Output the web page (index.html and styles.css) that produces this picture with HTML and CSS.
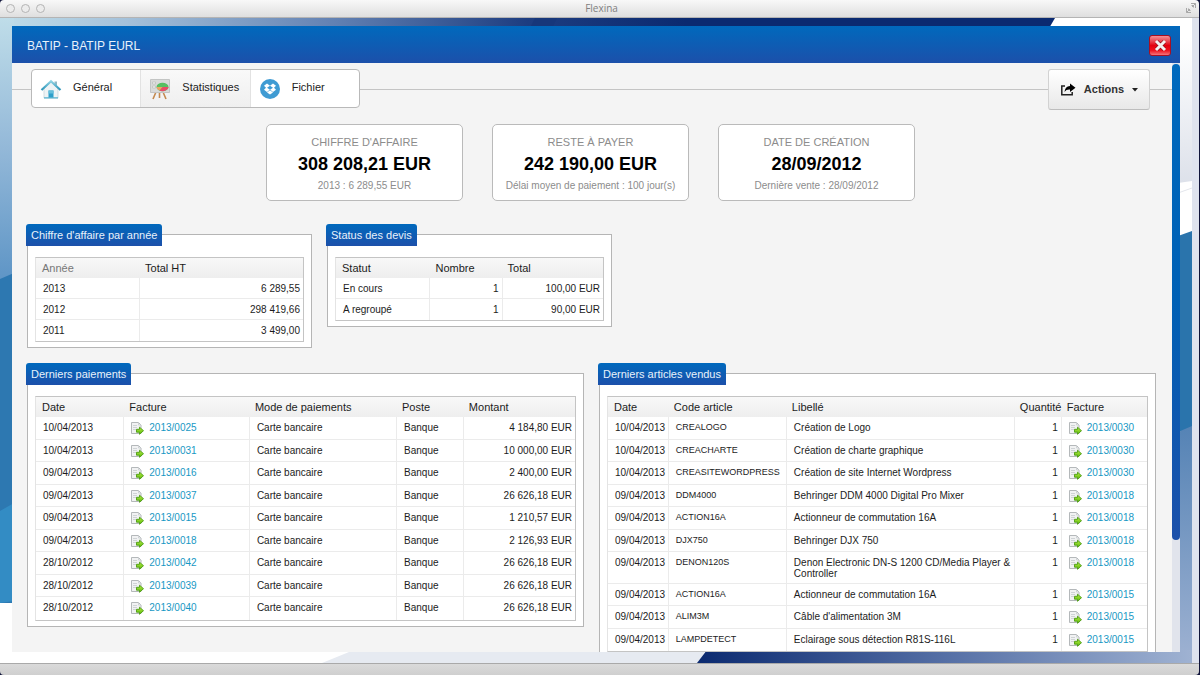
FILE: index.html
```html
<!DOCTYPE html>
<html lang="fr">
<head>
<meta charset="utf-8">
<title>Flexina</title>
<link rel="stylesheet" href="styles.css">
</head>
<body>
<svg class="defs" width="0" height="0" aria-hidden="true">
  <defs>
    <linearGradient id="g-arrow" x1="0" y1="0" x2="0" y2="1"><stop offset="0" stop-color="#b6ee3c"/><stop offset="1" stop-color="#5cb811"/></linearGradient>
    <symbol id="open-doc" viewBox="0 0 13 13">
      <path d="M.5 .5h7l2.500 2.500v8.500h-9.500z" fill="#f1f2f3" stroke="#b4b8ba"/>
      <path d="M7.500 .5v2.500h2.500M2 3.500h4M2 5.500h4M2 7.500h3" fill="none" stroke="#cfd3d5"/>
      <path d="M5.500 7.300h3V5.200l4 3.500-4 3.600v-2.100h-3z" fill="url(#g-arrow)" stroke="#4c9c12" stroke-width=".9" stroke-linejoin="round"/>
    </symbol>
  </defs>
</svg>
<div class="window">
  <header class="titlebar">
    <div class="lights">
      <button class="light" aria-label="Fermer la fenêtre"></button>
      <button class="light" aria-label="Réduire"></button>
      <button class="light" aria-label="Agrandir"></button>
    </div>
    <span class="window-title">Flexina</span>
    <button class="expand" aria-label="Plein écran">
      <svg width="12" height="12" viewBox="0 0 12 12" fill="none" stroke="#a8a8a8"><path d="M6 1.500h4.500V6M10.500 1.500L7 5M6.500 3.500h2v2M1.500 6v4.500H6M1.500 10.500L5 7M3.500 6.500v2h2"/></svg>
    </button>
  </header>

  <div class="desktop">
    <svg class="wallpaper" viewBox="0 0 1192 645" preserveAspectRatio="none" aria-hidden="true">
      <defs>
        <linearGradient id="w-top"><stop offset="0" stop-color="#bfdde9"/><stop offset=".12" stop-color="#a4c1da"/><stop offset=".32" stop-color="#6180b2"/><stop offset=".5" stop-color="#1d3d80"/><stop offset=".65" stop-color="#0b2a70"/><stop offset="1" stop-color="#0b2a70"/></linearGradient>
        <linearGradient id="w-left" x1="0" y1="0" x2="0" y2="1"><stop offset="0" stop-color="#bfdde9"/><stop offset=".5" stop-color="#93b8d8"/><stop offset="1" stop-color="#5e95c6"/></linearGradient>
        <linearGradient id="w-bottom"><stop offset="0" stop-color="#0b2a70"/><stop offset=".5" stop-color="#556fa5"/><stop offset="1" stop-color="#9fb2d2"/></linearGradient>
        <linearGradient id="w-right" x1="0" y1="0" x2="0" y2="1"><stop offset="0" stop-color="#5583b5"/><stop offset="1" stop-color="#9fb2d2"/></linearGradient>
        <linearGradient id="w-haze" x1="0" y1="0" x2="0" y2="1"><stop offset="0" stop-color="#fff"/><stop offset="1" stop-color="#dde1ea"/></linearGradient>
      </defs>
      <rect width="1192" height="645" fill="#fff"/>
      <path d="M0 0H1055L1048 12H0z" fill="url(#w-top)"/>
      <path d="M535 0h22l-6 12h-22z" fill="#17377a"/>
      <path d="M0 0h14v258L0 262z" fill="url(#w-left)"/>
      <path d="M0 261l14-6v330H0z" fill="#2d78b1"/>
      <path d="M0 493l14-8v98l-14 2z" fill="#338cc4"/>
      <path d="M1178 20h14v143l-14 2z" fill="url(#w-haze)"/>
      <path d="M1178 175l14-5" stroke="#e3e6ec"/>
      <path d="M1178 218l14-5v200h-14z" fill="#2a74ac"/>
      <path d="M1178 414l14-6v237h-14z" fill="url(#w-right)"/>
      <path d="M322 645l32-13h352l-8 13z" fill="#e6eaf1"/>
      <path d="M697 645l10-13h471l14 0v13z" fill="url(#w-bottom)"/>
    </svg>

    <main class="dialog">
      <header class="dialog-head">
        <h1>BATIP - BATIP EURL</h1>
        <button class="close" aria-label="Fermer">
          <svg width="13" height="13" viewBox="0 0 13 13"><path d="M2.500 2.500l8 8M10.500 2.500l-8 8" stroke="#8d0a14" stroke-width="4.200"/><path d="M2 2l9 9M11 2l-9 9" stroke="#f3f0f0" stroke-width="3"/></svg>
        </button>
      </header>
      <div class="dialog-body">
        <div class="content">
          <nav class="toolbar">
            <span class="rule rule-start"></span>
            <div class="tabs">
              <button class="tab">
                <svg width="22" height="22" viewBox="0 0 22 22"><defs><linearGradient id="roof" x1="0" y1="0" x2="0" y2="1"><stop offset="0" stop-color="#8ed3e4"/><stop offset="1" stop-color="#2a93b8"/></linearGradient></defs><path d="M14.500 3.500h2.500v5h-2.500z" fill="#8fb8c6"/><path d="M4 10.500l7-6.500 7 6.500V20H4z" fill="#eef3f5" stroke="#c2d0d5" stroke-width=".7"/><path d="M8.500 12.500h5V20h-5z" fill="#2e9fca"/><path d="M8.500 12.500h5v3h-5z" fill="#65bfdc"/><path d="M4 19.300h14v1.200H4z" fill="#5bb4d0"/><path d="M1.500 12L11 3.200 20.500 12" fill="none" stroke="url(#roof)" stroke-width="2.200"/></svg>
                Général
              </button>
              <button class="tab tab-current">
                <svg width="22" height="22" viewBox="0 0 22 22"><path d="M7 14L4 21M10.500 14v6M14 14l3 7" stroke="#c48a50" stroke-width="1.600"/><path d="M1.500 1.500h19v13h-19z" fill="#d9dad9" stroke="#c3c5c4"/><path d="M3.500 4h3v2h-3zM3.500 8h3v2h-3z" fill="#eef0ee" stroke="#b5b8b6" stroke-width=".6"/><ellipse cx="13.500" cy="9" rx="6" ry="4.200" fill="#57bf62"/><path d="M13.500 9h6a6 4.200 0 0 1-9 3.600z" fill="#ea4a68"/><path d="M13.500 9l-3 3.600A6 4.200 0 0 1 7.500 9z" fill="#f0a262"/></svg>
                Statistiques
              </button>
              <button class="tab">
                <svg width="22" height="22" viewBox="0 0 22 22"><circle cx="11" cy="11" r="10" fill="#3f9bd3"/><path d="M8 5.500l3 2.200 3-2.200 3 2.200-2 2 2 2-3 2.200-3-2.300-3 2.300-3-2.200 2-2-2-2z" fill="#fff"/><path d="M11 7.800l3 1.900-3 2-3-2z" fill="#3f9bd3"/><path d="M8 14.500l3-2.200 3 2.200-3 2z" fill="#fff"/></svg>
                Fichier
              </button>
            </div>
            <span class="rule"></span>
            <button class="actions">
              <svg width="16" height="13" viewBox="0 0 16 13"><path d="M5 3H1.800v8.800h10.400V9" fill="none" stroke="#222" stroke-width="1.500"/><path d="M10 .5l5.500 4.200L10 9V6.500C7.500 6.300 5.800 7 4.500 9 4.800 5.500 6.500 3.300 10 3z" fill="#000"/></svg>
              Actions
              <svg class="caret" width="6" height="4" viewBox="0 0 6 4"><path d="M0 0h6L3 3.500z" fill="#222"/></svg>
            </button>
            <span class="rule rule-end"></span>
          </nav>

          <section class="cards">
            <article class="card"><h2>CHIFFRE D'AFFAIRE</h2><strong>308 208,21 EUR</strong><p>2013 : 6 289,55 EUR</p></article>
            <article class="card"><h2>RESTE À PAYER</h2><strong>242 190,00 EUR</strong><p>Délai moyen de paiement : 100 jour(s)</p></article>
            <article class="card"><h2>DATE DE CRÉATION</h2><strong>28/09/2012</strong><p>Dernière vente : 28/09/2012</p></article>
          </section>

          <div class="panels panels-small">
            <section class="panel">
              <h2>Chiffre d'affaire par année</h2>
              <table class="compact years">
                <thead><tr><th class="sorted">Année</th><th>Total HT</th></tr></thead>
                <tbody>
                  <tr><td>2013</td><td class="num">6 289,55</td></tr>
                  <tr><td>2012</td><td class="num">298 419,66</td></tr>
                  <tr><td>2011</td><td class="num">3 499,00</td></tr>
                </tbody>
              </table>
            </section>
            <section class="panel">
              <h2>Status des devis</h2>
              <table class="compact quotes">
                <thead><tr><th>Statut</th><th>Nombre</th><th>Total</th></tr></thead>
                <tbody>
                  <tr><td>En cours</td><td class="num">1</td><td class="num">100,00 EUR</td></tr>
                  <tr><td>A regroupé</td><td class="num">1</td><td class="num">90,00 EUR</td></tr>
                </tbody>
              </table>
            </section>
          </div>

          <div class="panels panels-large">
            <section class="panel">
              <h2>Derniers paiements</h2>
              <table class="payments">
                <thead><tr><th>Date</th><th>Facture</th><th>Mode de paiements</th><th>Poste</th><th>Montant</th></tr></thead>
                <tbody>
                  <tr><td>10/04/2013</td><td><a href="#"><svg><use href="#open-doc"/></svg>2013/0025</a></td><td>Carte bancaire</td><td>Banque</td><td class="num">4 184,80 EUR</td></tr>
                  <tr><td>10/04/2013</td><td><a href="#"><svg><use href="#open-doc"/></svg>2013/0031</a></td><td>Carte bancaire</td><td>Banque</td><td class="num">10 000,00 EUR</td></tr>
                  <tr><td>09/04/2013</td><td><a href="#"><svg><use href="#open-doc"/></svg>2013/0016</a></td><td>Carte bancaire</td><td>Banque</td><td class="num">2 400,00 EUR</td></tr>
                  <tr><td>09/04/2013</td><td><a href="#"><svg><use href="#open-doc"/></svg>2013/0037</a></td><td>Carte bancaire</td><td>Banque</td><td class="num">26 626,18 EUR</td></tr>
                  <tr><td>09/04/2013</td><td><a href="#"><svg><use href="#open-doc"/></svg>2013/0015</a></td><td>Carte bancaire</td><td>Banque</td><td class="num">1 210,57 EUR</td></tr>
                  <tr><td>09/04/2013</td><td><a href="#"><svg><use href="#open-doc"/></svg>2013/0018</a></td><td>Carte bancaire</td><td>Banque</td><td class="num">2 126,93 EUR</td></tr>
                  <tr><td>28/10/2012</td><td><a href="#"><svg><use href="#open-doc"/></svg>2013/0042</a></td><td>Carte bancaire</td><td>Banque</td><td class="num">26 626,18 EUR</td></tr>
                  <tr><td>28/10/2012</td><td><a href="#"><svg><use href="#open-doc"/></svg>2013/0039</a></td><td>Carte bancaire</td><td>Banque</td><td class="num">26 626,18 EUR</td></tr>
                  <tr><td>28/10/2012</td><td><a href="#"><svg><use href="#open-doc"/></svg>2013/0040</a></td><td>Carte bancaire</td><td>Banque</td><td class="num">26 626,18 EUR</td></tr>
                </tbody>
              </table>
            </section>
            <section class="panel">
              <h2>Derniers articles vendus</h2>
              <table class="articles">
                <thead><tr><th>Date</th><th>Code article</th><th>Libellé</th><th>Quantité</th><th>Facture</th></tr></thead>
                <tbody>
                  <tr><td>10/04/2013</td><td class="code">CREALOGO</td><td>Création de Logo</td><td class="num">1</td><td><a href="#"><svg><use href="#open-doc"/></svg>2013/0030</a></td></tr>
                  <tr><td>10/04/2013</td><td class="code">CREACHARTE</td><td>Création de charte graphique</td><td class="num">1</td><td><a href="#"><svg><use href="#open-doc"/></svg>2013/0030</a></td></tr>
                  <tr><td>10/04/2013</td><td class="code">CREASITEWORDPRESS</td><td>Création de site Internet Wordpress</td><td class="num">1</td><td><a href="#"><svg><use href="#open-doc"/></svg>2013/0030</a></td></tr>
                  <tr><td>09/04/2013</td><td class="code">DDM4000</td><td>Behringer DDM 4000 Digital Pro Mixer</td><td class="num">1</td><td><a href="#"><svg><use href="#open-doc"/></svg>2013/0018</a></td></tr>
                  <tr><td>09/04/2013</td><td class="code">ACTION16A</td><td>Actionneur de commutation 16A</td><td class="num">1</td><td><a href="#"><svg><use href="#open-doc"/></svg>2013/0018</a></td></tr>
                  <tr><td>09/04/2013</td><td class="code">DJX750</td><td>Behringer DJX 750</td><td class="num">1</td><td><a href="#"><svg><use href="#open-doc"/></svg>2013/0018</a></td></tr>
                  <tr><td>09/04/2013</td><td class="code">DENON120S</td><td>Denon Electronic DN-S 1200 CD/Media Player &amp; Controller</td><td class="num">1</td><td><a href="#"><svg><use href="#open-doc"/></svg>2013/0018</a></td></tr>
                  <tr><td>09/04/2013</td><td class="code">ACTION16A</td><td>Actionneur de commutation 16A</td><td class="num">1</td><td><a href="#"><svg><use href="#open-doc"/></svg>2013/0015</a></td></tr>
                  <tr><td>09/04/2013</td><td class="code">ALIM3M</td><td>Câble d'alimentation 3M</td><td class="num">1</td><td><a href="#"><svg><use href="#open-doc"/></svg>2013/0015</a></td></tr>
                  <tr><td>09/04/2013</td><td class="code">LAMPDETECT</td><td>Eclairage sous détection R81S-116L</td><td class="num">1</td><td><a href="#"><svg><use href="#open-doc"/></svg>2013/0015</a></td></tr>
                </tbody>
              </table>
            </section>
          </div>
        </div>
        <div class="scrollbar"><div class="thumb"></div></div>
      </div>
    </main>
  </div>
  <footer class="statusbar"></footer>
</div>
</body>
</html>
```
FILE: styles.css
```css
* {
  box-sizing: border-box;
}

body {
  margin: 0;
  background: #10143a;
  color: #1c1c1c;
  font: 10px/11px "Liberation Sans", Arial, sans-serif;
}

h1, h2, p {
  margin: 0;
  font-weight: normal;
}

button {
  margin: 0;
  padding: 0;
  border: 0;
  background: none;
  color: inherit;
  font: inherit;
}

.defs {
  position: absolute;
}

/* window frame */

.window {
  display: flex;
  flex-direction: column;
  height: 100vh;
  margin-right: 1px;
  border-radius: 4px;
  overflow: hidden;
}

.titlebar {
  display: grid;
  grid-template-columns: 1fr auto 1fr;
  align-items: center;
  flex: none;
  height: 18px;
  padding: 0 2px 1px 6px;
  border-bottom: 1px solid #b4b4b4;
  background: linear-gradient(#f8f8f8, #dfdfdf);
}

.lights {
  display: flex;
  gap: 6px;
}

.light {
  width: 9px;
  height: 9px;
  border: 1px solid #b3b3b3;
  border-radius: 50%;
  background: #ececec;
}

.window-title {
  color: #808080;
  font: 10px/12px "Open Sans", sans-serif;
}

.expand {
  display: flex;
  justify-self: end;
}

.desktop {
  position: relative;
  display: flex;
  flex: 1;
  min-height: 0;
  padding: 8px 12px 11px;
  border-right: 7px solid #dfe3ee;
}

.wallpaper {
  position: absolute;
  inset: 0;
  width: 100%;
  height: 100%;
}

.statusbar {
  flex: none;
  height: 12px;
  border-top: 1px solid #a9a9a9;
  background: linear-gradient(#dadada, #cfcfcf);
}

/* dialog */

.dialog {
  position: relative;
  display: flex;
  flex: 1;
  flex-direction: column;
  min-width: 0;
  background: #f4f4f4;
}

.dialog-head {
  display: flex;
  align-items: center;
  justify-content: space-between;
  flex: none;
  height: 37px;
  padding: 1px 9px 0 15px;
  background: linear-gradient(#0069bd, #1c50aa);
  color: #e8f2fb;
}

.dialog-head h1 {
  padding-top: 2px;
  font-size: 12px;
  line-height: 16px;
}

.close {
  display: flex;
  align-items: center;
  justify-content: center;
  width: 22px;
  height: 21px;
  border: 1px solid #a80f22;
  border-radius: 3px;
  background: linear-gradient(#f58e94, #e8404b 30%, #e3000f 50%, #f0101c 75%, #f5757b);
}

.dialog-body {
  display: flex;
  flex: 1;
  min-height: 0;
}

.content {
  flex: 1;
  min-width: 0;
  overflow: hidden;
}

.scrollbar {
  flex: none;
  width: 8px;
  padding-top: 1px;
  background: #e1e4ec;
}

.thumb {
  height: 81%;
  border-radius: 4px;
  background: linear-gradient(#0069bd, #0060b5 50%, #1c50aa);
}

/* toolbar */

.toolbar {
  display: flex;
  align-items: center;
  padding-top: 6px;
}

.rule {
  flex: 1;
  height: 1px;
  background: #c4c4c4;
}

.rule-start {
  flex: 0 0 19px;
}

.rule-end {
  flex: 0 0 22px;
}

.tabs {
  display: flex;
  width: 329px;
  height: 39px;
  margin-bottom: 2px;
  border: 1px solid #b9b9b9;
  border-radius: 4px;
  background: #fff;
  overflow: hidden;
}

.tab {
  display: flex;
  flex: 1;
  align-items: center;
  gap: 11px;
  padding: 0 0 2px 8px;
  color: #222;
  font-size: 11px;
}

.tab svg {
  margin-top: 3px;
}

.tab-current {
  border: solid #e2e2e2;
  border-width: 0 1px;
  background: linear-gradient(#f9f9f9, #efefef);
}

.actions {
  display: flex;
  align-items: center;
  justify-content: center;
  gap: 8px;
  width: 102px;
  height: 41px;
  border: 1px solid #d2d2d2;
  border-bottom-color: #bdbdbd;
  border-radius: 3px;
  background: linear-gradient(#fff, #e8e8e8);
  color: #333;
  font-size: 11px;
  font-weight: bold;
}

/* key figures */

.cards {
  display: flex;
  justify-content: center;
  gap: 29px;
  padding: 14px 3px 0 0;
}

.card {
  flex: 0 1 197px;
  padding: 9px 0 6px;
  border: 1px solid #bababa;
  border-radius: 5px;
  background: #fff;
  color: #8c8c8c;
  text-align: center;
  white-space: nowrap;
}

.card h2 {
  font-size: 11px;
  line-height: 16px;
}

.card strong {
  display: block;
  color: #000;
  font-size: 18px;
  line-height: 28px;
}

.card p {
  line-height: 16px;
}

/* panels */

.panels {
  display: grid;
  align-items: start;
  gap: 15px;
  padding: 0 16px 0 15px;
}

.panels-small {
  grid-template-columns: 285fr 285fr 529fr;
  margin-top: 33px;
}

.panels-large {
  grid-template-columns: 1fr 1fr;
  margin-top: 25px;
}

.panel {
  position: relative;
  min-width: 0;
  padding: 22px 7px 5px;
  border: 1px solid #b5b5b5;
  background: #fff;
}

.panel h2 {
  position: absolute;
  top: -11px;
  left: -2px;
  padding: 0 5px;
  border-radius: 3px 3px 0 0;
  background: linear-gradient(#0069bd, #1c50aa);
  color: #e8f2fb;
  font-size: 11px;
  line-height: 22px;
  white-space: nowrap;
}

/* tables */

table {
  width: 100%;
  border: 1px solid #c4c4c4;
  border-left-color: #e4e4e4;
  border-collapse: separate;
  border-spacing: 0;
  table-layout: fixed;
}

th {
  height: 20px;
  padding: 0 0 0 6px;
  background: linear-gradient(#f8f8f8, #eee);
  font-size: 11px;
  font-weight: normal;
  text-align: left;
  white-space: nowrap;
}

.sorted {
  color: #777;
}

td {
  height: 22px;
  padding: 5px 0 4px 7px;
  border-bottom: 1px solid #ebebeb;
  border-left: 1px solid #ebebeb;
  vertical-align: top;
}

td:first-child {
  border-left: 0;
}

tbody tr:nth-child(odd) td {
  height: 23px;
}

.compact tbody tr td {
  height: 21px;
}

tbody tr:last-child td {
  border-bottom: 0;
}

.num {
  padding-right: 3px;
  text-align: right;
}

.code {
  font-size: 9px;
}

td a {
  display: flex;
  gap: 5px;
  height: 11px;
  color: #1798c4;
  text-decoration: none;
}

td a svg {
  flex: none;
  width: 13px;
  height: 13px;
}

.years th:nth-child(1) { width: 38.6%; }

.quotes th:nth-child(1) { width: 35%; }
.quotes th:nth-child(2) { width: 27%; }

.payments th:nth-child(1) { width: 16.2%; }
.payments th:nth-child(2) { width: 23.3%; }
.payments th:nth-child(3) { width: 27.3%; }
.payments th:nth-child(4) { width: 12.4%; }

.articles th:nth-child(1) { width: 11.1%; }
.articles th:nth-child(2) { width: 21.9%; }
.articles th:nth-child(3) { width: 42.3%; }
.articles th:nth-child(4) { width: 8.7%; }
```
